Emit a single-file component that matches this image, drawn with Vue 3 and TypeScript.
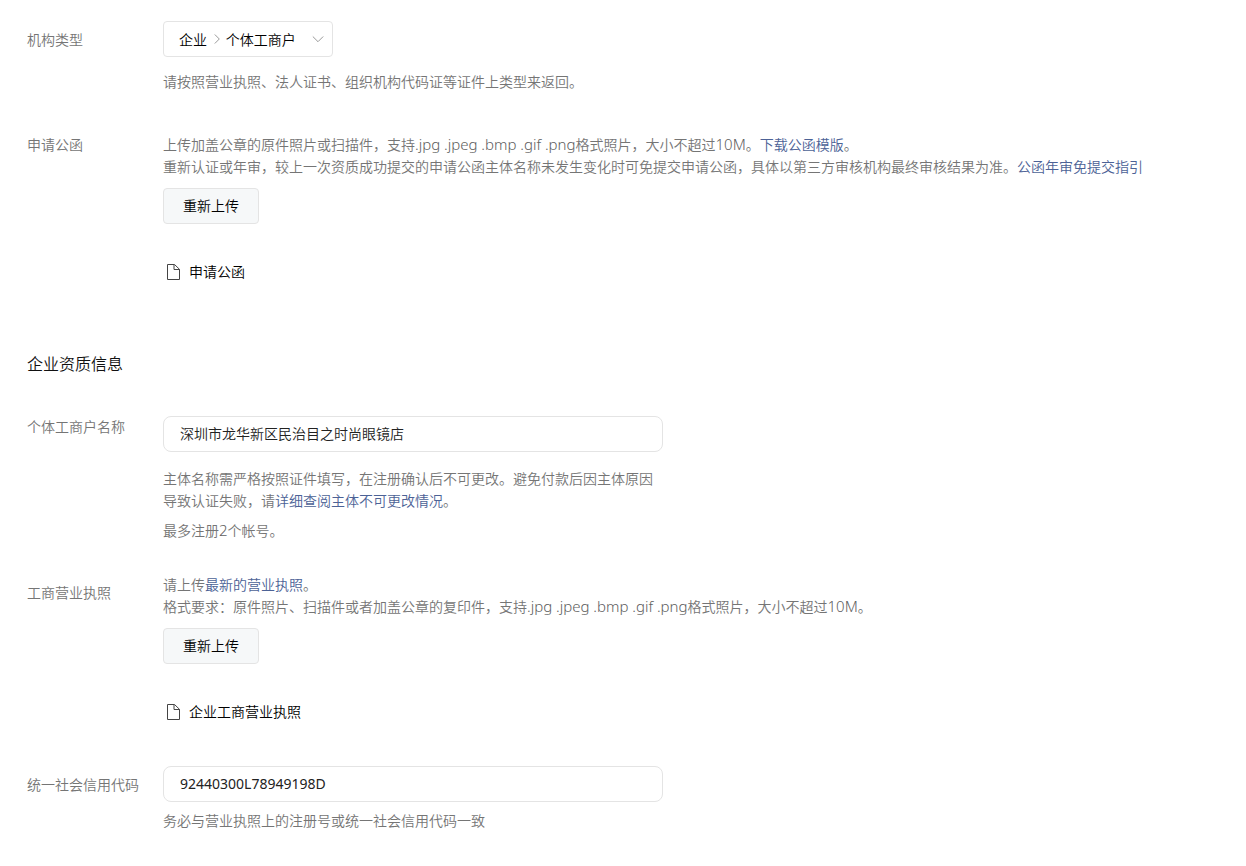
<script setup lang="ts">
import { ref } from 'vue'

const orgTypes: string[] = ['企业\u3000\u2004个体工商户']
const orgType = ref<string>(orgTypes[0])
const companyName = ref<string>('深圳市龙华新区民治目之时尚眼镜店')
const creditCode = ref<string>('92440300L78949198D')
const formats = '.jpg .jpeg .bmp .gif .png'
</script>

<template>
  <form class="page" @submit.prevent>
    <div class="row">
      <label class="label inset" for="org-type">机构类型</label>
      <div class="field">
        <div class="picker">
          <select id="org-type" v-model="orgType">
            <option v-for="t in orgTypes" :key="t" :value="t">{{ t }}</option>
          </select>
          <svg class="sep" width="6" height="10" viewBox="0 0 6 10" aria-hidden="true">
            <path d="M.8 .5 5.3 5 .8 9.5" />
          </svg>
          <svg class="arrow" width="12" height="8" viewBox="0 0 12 8" aria-hidden="true">
            <path d="M.8 1.5 6 6.7 11.2 1.5" />
          </svg>
        </div>
        <p class="after-picker">请按照营业执照、法人证书、组织机构代码证等证件上类型来返回。</p>
      </div>
    </div>

    <div class="row letter">
      <span class="label">申请公函</span>
      <div class="field">
        <p>上传加盖公章的原件照片或扫描件，支持<span class="latin">{{ formats }}</span>格式照片，大小不超过<span class="latin">10M</span>。<a href="#">下载公函模版</a>。</p>
        <p>重新认证或年审，较上一次资质成功提交的申请公函主体名称未发生变化时可免提交申请公函，具体以第三方审核机构最终审核结果为准。<a href="#">公函年审免提交指引</a></p>
        <button type="button">重新上传</button>
        <a class="file" href="#">
          <svg width="14" height="18" viewBox="0 0 14 18" aria-hidden="true">
            <path d="M1.5 1.5H8.5L13.5 6.3V16.5H1.5ZM8 1.5V6.5H13.5" />
          </svg>
          申请公函
        </a>
      </div>
    </div>

    <h2>企业资质信息</h2>

    <div class="row">
      <label class="label" for="company-name">个体工商户名称</label>
      <div class="field">
        <input id="company-name" v-model="companyName" type="text" />
        <p class="note">主体名称需严格按照证件填写，在注册确认后不可更改。避免付款后因主体原因导致认证失败，请<a href="#">详细查阅主体不可更改情况</a>。</p>
        <p class="limit">最多注册<span class="latin">2</span>个帐号。</p>
      </div>
    </div>

    <div class="row license">
      <span class="label inset">工商营业执照</span>
      <div class="field">
        <p>请上传<a href="#">最新的营业执照</a>。</p>
        <p>格式要求：原件照片、扫描件或者加盖公章的复印件，支持<span class="latin">{{ formats }}</span>格式照片，大小不超过<span class="latin">10M</span>。</p>
        <button type="button">重新上传</button>
        <a class="file" href="#">
          <svg width="14" height="18" viewBox="0 0 14 18" aria-hidden="true">
            <path d="M1.5 1.5H8.5L13.5 6.3V16.5H1.5ZM8 1.5V6.5H13.5" />
          </svg>
          企业工商营业执照
        </a>
      </div>
    </div>

    <div class="row code">
      <label class="label inset" for="credit-code">统一社会信用代码</label>
      <div class="field">
        <input id="credit-code" v-model="creditCode" class="digits" type="text" />
        <p class="limit">务必与营业执照上的注册号或统一社会信用代码一致</p>
      </div>
    </div>
  </form>
</template>

<style>
body {
  background: #fff;
}
</style>

<style scoped>
.page {
  padding: 21px 27px;
  font-family: "Noto Sans", "Noto Sans CJK SC", sans-serif;
  font-size: 14px;
  font-weight: 350;
  line-height: 22px;
  color: #757575;
}
.row {
  display: flex;
  align-items: flex-start;
}
.label {
  flex: 0 0 136px;
}
.inset {
  padding-top: 8px;
}
.field {
  flex: 1;
  min-width: 0;
}
p {
  margin: 0;
}
a {
  color: #4c6296;
  text-decoration: none;
}
.picker {
  position: relative;
  width: 170px;
}
select,
input,
button {
  box-sizing: border-box;
  display: block;
  height: 36px;
  border: 1px solid #e4e4e4;
  border-radius: 4px;
  background: #fff;
  font-family: inherit;
  font-size: 14px;
  font-weight: inherit;
}
select {
  appearance: none;
  width: 100%;
  padding: 0 30px 0 15px;
  color: #000;
}
.picker svg {
  position: absolute;
  top: 50%;
  transform: translateY(-50%);
  fill: none;
  stroke: #999;
  pointer-events: none;
}
.sep {
  left: 51px;
}
.arrow {
  right: 9px;
}
input {
  width: 100%;
  max-width: 500px;
  padding: 0 16px 2px;
  border-radius: 8px;
  color: #222;
}
.digits {
  font-weight: 400;
}
.latin {
  font-size: 15px;
  font-weight: 300;
  line-height: 1;
  color: #606060;
}
button {
  min-width: 96px;
  margin-top: 10px;
  padding: 0 18px 2px;
  background: #f6f8f9;
  color: #000;
}
.file {
  display: flex;
  align-items: center;
  gap: 9px;
  width: fit-content;
  margin-top: 37px;
  padding-left: 3px;
  color: #000;
}
.file svg {
  fill: none;
  stroke: #444;
}
h2 {
  margin: 70px 0 41px;
  font-size: 16px;
  font-weight: inherit;
  line-height: 22px;
  color: #111;
}
.after-picker {
  margin-top: 14px;
}
.letter {
  margin-top: 41px;
}
.note {
  max-width: 500px;
  margin-top: 16px;
}
.limit {
  margin-top: 8px;
}
.license {
  margin-top: 32px;
}
.code {
  margin-top: 43px;
}
</style>
